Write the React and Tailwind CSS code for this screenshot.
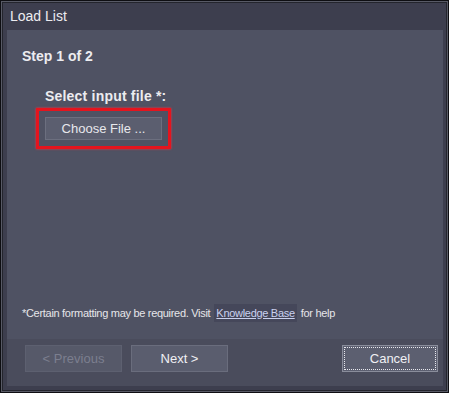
import React from 'react';

const App = () => {
  return (
    <div
      className="w-[449px] h-[393px] border border-[#0e0e12] bg-[#585a66] p-px"
      style={{ fontFamily: '"Liberation Sans", Arial, sans-serif' }}
    >
      <div className="flex h-full flex-col border border-[#24252d] bg-[#3d3e4e] pb-[4px] pl-[4px] pr-[3px]">
        {/* Title bar */}
        <div className="flex h-[27px] items-center pl-[3px] text-[14px] text-[#ececf0]">
          Load List
        </div>

        {/* Panel */}
        <div className="flex flex-1 flex-col bg-[#4f5263]">
          <div className="flex flex-1 flex-col pl-[15px] pt-[18px]">
            <div className="text-[14px] font-bold leading-[17px] text-[#ececf0]">Step 1 of 2</div>

            <div className="mt-[23px] pl-[23px] text-[14px] font-bold leading-[17px] tracking-[0.2px] text-[#ececf0]">
              Select input file *:
            </div>

            <div className="ml-[14px] mt-[3px] self-start border-[3px] border-[#e5141e] p-[6px] shadow-[0_0_2px_#ff3040]">
              <button className="flex h-[23px] w-[117px] items-center justify-center border border-[#6c6f7f] bg-[#5b5e6f] text-[13px] text-[#e8e8ec]">
                Choose File ...
              </button>
            </div>

            <div className="mt-auto mb-[17px] flex items-center text-[11px] tracking-[-0.3px] text-[#e6e6ea]">
              <span>*Certain formatting may be required. Visit</span>
              <span className="ml-[4px] bg-[#45475a] px-[2px] py-[1px] text-[#c9d0ee] underline">
                Knowledge Base
              </span>
              <span className="ml-[4px]">for help</span>
            </div>
          </div>

          {/* Footer */}
          <div className="flex h-[47px] items-start bg-[#4a4c5c] pl-[18px] pr-[5px] pt-[6px]">
            <button className="flex h-[27px] w-[97px] items-center justify-center border border-[#5d6070] bg-[#565969] text-[13px] text-[#7c7f8f]">
              &lt; Previous
            </button>
            <button className="ml-[9px] flex h-[27px] w-[97px] items-center justify-center border border-[#6a6d7d] bg-[#5a5d6e] text-[13px] text-[#f0f0f4]">
              Next &gt;
            </button>
            <button className="ml-auto flex h-[27px] w-[96px] items-center justify-center border border-[#8a8d9b] bg-[#5c5f70] p-px text-[13px] text-[#f0f0f4]">
              <span className="flex h-full w-full items-center justify-center border border-dotted border-[#e8e8ee]">
                Cancel
              </span>
            </button>
          </div>
        </div>
      </div>
    </div>
  );
};

export default App;
